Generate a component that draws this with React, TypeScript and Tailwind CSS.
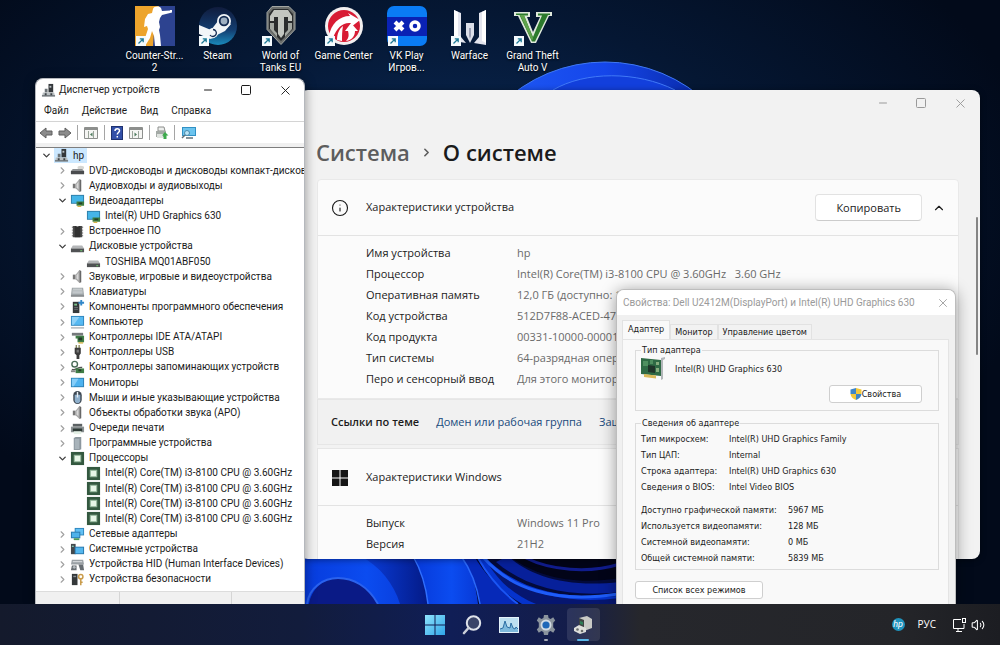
import { useState, ReactNode } from 'react';
import { ChevronDown, ChevronRight, ChevronUp, Info, Minus, Square, Volume2, X } from 'lucide-react';
import clsx from 'clsx';

type IconName =
  | 'root' | 'optical' | 'speaker' | 'display' | 'firmware' | 'disk' | 'keyboard' | 'component'
  | 'computer' | 'ide' | 'usb' | 'storage' | 'monitor' | 'mouse' | 'printer' | 'software' | 'cpu'
  | 'network' | 'system' | 'hid' | 'security';

interface TreeItem {
  label: string;
  icon: IconName;
  level: number;
  open?: boolean;
}

const CPU = 'Intel(R) Core(TM) i3-8100 CPU @ 3.60GHz';

const TREE: TreeItem[] = [
  { label: 'hp', icon: 'root', level: 0, open: true },
  { label: 'DVD-дисководы и дисководы компакт-дисков', icon: 'optical', level: 1, open: false },
  { label: 'Аудиовходы и аудиовыходы', icon: 'speaker', level: 1, open: false },
  { label: 'Видеоадаптеры', icon: 'display', level: 1, open: true },
  { label: 'Intel(R) UHD Graphics 630', icon: 'display', level: 2 },
  { label: 'Встроенное ПО', icon: 'firmware', level: 1, open: false },
  { label: 'Дисковые устройства', icon: 'disk', level: 1, open: true },
  { label: 'TOSHIBA MQ01ABF050', icon: 'disk', level: 2 },
  { label: 'Звуковые, игровые и видеоустройства', icon: 'speaker', level: 1, open: false },
  { label: 'Клавиатуры', icon: 'keyboard', level: 1, open: false },
  { label: 'Компоненты программного обеспечения', icon: 'component', level: 1, open: false },
  { label: 'Компьютер', icon: 'computer', level: 1, open: false },
  { label: 'Контроллеры IDE ATA/ATAPI', icon: 'ide', level: 1, open: false },
  { label: 'Контроллеры USB', icon: 'usb', level: 1, open: false },
  { label: 'Контроллеры запоминающих устройств', icon: 'storage', level: 1, open: false },
  { label: 'Мониторы', icon: 'monitor', level: 1, open: false },
  { label: 'Мыши и иные указывающие устройства', icon: 'mouse', level: 1, open: false },
  { label: 'Объекты обработки звука (APO)', icon: 'speaker', level: 1, open: false },
  { label: 'Очереди печати', icon: 'printer', level: 1, open: false },
  { label: 'Программные устройства', icon: 'software', level: 1, open: false },
  { label: 'Процессоры', icon: 'cpu', level: 1, open: true },
  { label: CPU, icon: 'cpu', level: 2 },
  { label: CPU, icon: 'cpu', level: 2 },
  { label: CPU, icon: 'cpu', level: 2 },
  { label: CPU, icon: 'cpu', level: 2 },
  { label: 'Сетевые адаптеры', icon: 'network', level: 1, open: false },
  { label: 'Системные устройства', icon: 'system', level: 1, open: false },
  { label: 'Устройства HID (Human Interface Devices)', icon: 'hid', level: 1, open: false },
  { label: 'Устройства безопасности', icon: 'security', level: 1, open: false },
];

const INDENT = ['pl-0', 'pl-4', 'pl-8'];

const DEVICE_SPECS = [
  ['Имя устройства', 'hp'],
  ['Процессор', 'Intel(R) Core(TM) i3-8100 CPU @ 3.60GHz \u00a0 3.60 GHz'],
  ['Оперативная память', '12,0 ГБ (доступно: 11,7 ГБ)'],
  ['Код устройства', '512D7F88-ACED-47'],
  ['Код продукта', '00331-10000-00001'],
  ['Тип системы', '64-разрядная операционная система'],
  ['Перо и сенсорный ввод', 'Для этого монитора'],
];

const WINDOWS_SPECS = [
  ['Выпуск', 'Windows 11 Pro'],
  ['Версия', '21H2'],
];

const ADAPTER_INFO = [
  ['Тип микросхем:', 'Intel(R) UHD Graphics Family'],
  ['Тип ЦАП:', 'Internal'],
  ['Строка адаптера:', 'Intel(R) UHD Graphics 630'],
  ['Сведения о BIOS:', 'Intel Video BIOS'],
];

const ADAPTER_MEMORY = [
  ['Доступно графической памяти:', '5967 МБ'],
  ['Используется видеопамяти:', '128 МБ'],
  ['Системной видеопамяти:', '0 МБ'],
  ['Общей системной памяти:', '5839 МБ'],
];

/* Tree icons, 16x16 */
const treeIcons: Record<IconName, ReactNode> = {
  root: (
    <>
      <rect x="8" y="1" width="5" height="9" fill="#34383b" />
      <rect x="9" y="3" width="2" height="2" fill="#b9c0c4" />
      <path d="M4 6h3v4H4z" fill="#6d7478" />
      <path d="M2 10h12l1 4H1z" fill="#b9bfc2" />
      <path d="M1 13h14v1.500H1z" fill="#62686c" />
      <path d="M4 11h2v2H4zM10 11h2v2h-2z" fill="#3f4448" />
    </>
  ),
  optical: (
    <>
      <ellipse cx="11.500" cy="5" rx="3.500" ry="2" fill="#d6d6d2" />
      <path d="M3 6.500h10l2 2v3H1v-3z" fill="#8d9092" />
      <path d="M1 8.500h14V12H1z" fill="#4a4c4e" />
    </>
  ),
  speaker: (
    <>
      <path d="M3 6h3v5H3z" fill="#777" />
      <path d="M6 6l4-5v14l-4-4z" fill="#a9a9a9" />
      <path d="M10 1l2 1v12l-2 1z" fill="#686868" />
      <path d="M7 7l2-3v8L7 10z" fill="#d8d8d8" />
    </>
  ),
  display: (
    <>
      <rect x="1" y="2" width="14" height="9.500" fill="#2f7ea8" />
      <rect x="2" y="3" width="12" height="7.500" fill="#45b5e8" />
      <path d="M7 9h8v4.500H7z" fill="#3d7d3f" />
      <path d="M9 10h4v2H9z" fill="#22402a" />
      <path d="M8 13.500h4V15H8z" fill="#d5b44a" />
    </>
  ),
  firmware: (
    <>
      <path d="M3 2h10v12H3z" fill="#4b4b4b" />
      <path d="M5 2h6v12H5z" fill="#303030" />
      <path d="M2 3h1v1H2zM2 6h1v1H2zM2 9h1v1H2zM2 12h1v1H2zM13 3h1v1h-1zM13 6h1v1h-1zM13 9h1v1h-1zM13 12h1v1h-1z" fill="#555" />
      <path d="M7 2h2v1H7z" fill="#aaa" />
    </>
  ),
  disk: (
    <>
      <path d="M3 7h10l2 3H1z" fill="#b4b6b8" />
      <path d="M1 10h14v4H1z" fill="#505254" />
      <path d="M11 12h2v1h-2z" fill="#6fd06f" />
    </>
  ),
  keyboard: (
    <>
      <path d="M2 4h12l1 8H1z" fill="#9ea4a7" />
      <path d="M3 5.500h10M2.500 7.500h11M2.500 9.500h11" stroke="#dfe3e5" />
      <path d="M1 12h14v1.500H1z" fill="#6b7073" />
    </>
  ),
  component: (
    <>
      <path d="M3 3h7v12H3z" fill="#34383a" />
      <path d="M4.500 5h3v2h-3z" fill="#7ec28a" />
      <path d="M4.500 9h4M4.500 11h4" stroke="#6b7073" />
      <path d="M12 1v6M9 4h6" stroke="#3187c9" strokeWidth="2" />
    </>
  ),
  computer: (
    <>
      <rect x="1" y="1" width="14" height="10.500" fill="#2f86bd" />
      <rect x="2" y="2" width="12" height="8.500" fill="#56b9f2" />
      <path d="M2 2h8l-6 8.500H2z" fill="#8ed1f8" />
      <path d="M1 13h14v1.500H1z" fill="#aeb4b8" />
    </>
  ),
  ide: (
    <>
      <path d="M2 3h12v3H2z" fill="#767a7c" />
      <path d="M6 6h9v7H8V9H6z" fill="#3f7d46" />
      <path d="M9 8h4v3H9z" fill="#24392a" />
      <path d="M9 13h5v1.500H9z" fill="#d5b44a" />
    </>
  ),
  usb: (
    <>
      <path d="M6 0h1.500v4H6zM9 0h1.500v4H9z" fill="#8a8a60" />
      <path d="M5 3h6.500v6l-1.500 2v4H7v-4L5 9z" fill="#3b3b3b" />
      <path d="M7 5h2.500v3H7z" fill="#777" />
    </>
  ),
  storage: (
    <>
      <circle cx="5" cy="4.500" r="3" fill="none" stroke="#4a6b58" strokeWidth="1.500" />
      <path d="M2 10c4 2 6-3 11-2" stroke="#555" strokeWidth="1.500" fill="none" />
      <path d="M6 9h9v5H6z" fill="#3f7d46" />
      <path d="M9 10h3v2H9z" fill="#24392a" />
      <path d="M1 11h5v2H1z" fill="#888" />
    </>
  ),
  monitor: (
    <>
      <rect x="1" y="3" width="14" height="10" fill="#2d7fb5" />
      <rect x="2" y="4" width="12" height="8" fill="#4db2ef" />
      <path d="M2 4h7l-5 8H2z" fill="#85cdf8" />
    </>
  ),
  mouse: (
    <>
      <rect x="3.500" y="1" width="9" height="14" rx="4.500" fill="#3c4650" />
      <path d="M5 5h6v6a3 3 0 0 1-6 0z" fill="#8fb0cc" />
      <path d="M8 2v6" stroke="#e7eef4" strokeWidth="1.500" />
    </>
  ),
  printer: (
    <>
      <path d="M3 3h10v3H3z" fill="#5c6163" />
      <path d="M1 6h14v6H1z" fill="#8a9092" />
      <path d="M3 8h10v3H3z" fill="#2e3a36" />
      <path d="M4 11h8v3H4z" fill="#e4f0e6" />
    </>
  ),
  software: (
    <>
      <path d="M4 2l2-1h6v13l-2 1H4z" fill="#8c979e" />
      <path d="M5 3h5v11H5z" fill="#a8b3ba" />
    </>
  ),
  cpu: (
    <>
      <rect x="1" y="1" width="14" height="14" fill="#33583f" />
      <rect x="4.500" y="4.500" width="7" height="7" fill="#e6f5e6" stroke="#8fb497" />
    </>
  ),
  network: (
    <>
      <rect x="5" y="1" width="10" height="8" fill="#2f86bd" />
      <rect x="6" y="2" width="8" height="6" fill="#62c0f4" />
      <rect x="1" y="5" width="10" height="7" fill="#2a78ac" />
      <rect x="2" y="6" width="8" height="5" fill="#4fb2ea" />
      <path d="M4 12h6v2H4z" fill="#4f9a5a" />
    </>
  ),
  system: (
    <>
      <path d="M1 2h5v11H1z" fill="#43494d" />
      <path d="M2 4h2v1H2z" fill="#9fd" />
      <rect x="5" y="5" width="10" height="8" fill="#2a78ac" />
      <rect x="6" y="6" width="8" height="6" fill="#55b7ee" />
    </>
  ),
  hid: (
    <>
      <path d="M2 3h12l1 5H1z" fill="#9aa0a4" />
      <path d="M3 5h10" stroke="#e2e5e7" />
      <path d="M2 9h5v5H1zM9 8h5l1 6h-4z" fill="#676d72" />
      <circle cx="4.500" cy="11" r="1.500" fill="#b7bdc1" />
    </>
  ),
  security: (
    <>
      <path d="M2 2h6v12H2z" fill="#34383a" />
      <path d="M3.500 4h3v1.500h-3z" fill="#8a8f92" />
      <circle cx="11.500" cy="5" r="2.300" fill="none" stroke="#c99b4a" strokeWidth="1.600" />
      <path d="M11.500 7v7M11.500 11h2" stroke="#c99b4a" strokeWidth="1.600" />
    </>
  ),
};

function TreeIcon({ name }: { name: IconName }) {
  return (
    <svg viewBox="0 0 16 16" className="size-[15px] shrink-0" aria-hidden="true">
      {treeIcons[name]}
    </svg>
  );
}

function Wallpaper() {
  return (
    <svg
      viewBox="0 0 1000 604"
      preserveAspectRatio="xMidYMid slice"
      className="absolute inset-0 size-full"
      aria-hidden="true"
    >
      <defs>
        <radialGradient id="bg" cx="0.45" cy="0.35" r="0.6">
          <stop offset="0" stopColor="#0a2c5c" />
          <stop offset="0.55" stopColor="#051733" />
          <stop offset="1" stopColor="#020a1a" />
        </radialGradient>
        <linearGradient id="petal" x1="0.2" x2="0.8">
          <stop offset="0" stopColor="#1c55f2" />
          <stop offset="0.5" stopColor="#1546ea" />
          <stop offset="1" stopColor="#0a2cae" />
        </linearGradient>
        <linearGradient id="band" x1="0" x2="1">
          <stop offset="0" stopColor="#0638d8" />
          <stop offset="0.6" stopColor="#0b4cf0" />
          <stop offset="1" stopColor="#0839d6" />
        </linearGradient>
        <linearGradient id="shade" x1="0" x2="1">
          <stop offset="0" stopColor="#0a3fe0" />
          <stop offset="1" stopColor="#041a86" />
        </linearGradient>
      </defs>
      <rect width="1000" height="604" fill="url(#bg)" />
      <circle cx="605" cy="211" r="149" fill="url(#petal)" stroke="#3f78f5" />
      <path d="M553 90c32-19 84-19 122 0" fill="#123fdc" stroke="#4079f7" />
      <path d="M290 540h330v64H290z" fill="#030a3a" />
      <path d="M290 540h90c16 16 30 36 38 64H290z" fill="url(#band)" />
      <path d="M309 604c2-14 14-26 29-26s32 10 40 26z" fill="#0a1a86" />
      <path d="M307 604c2-16 16-26 31-26s30 8 40 26" fill="none" stroke="#2a62ee" strokeWidth="2" />
      <path d="M360 556c20 10 34 28 40 48h28c-2-20-6-34-14-48z" fill="url(#shade)" />
      <path d="M412 552h50c8 16 14 32 16 52h-50c-2-20-8-36-16-52z" fill="url(#band)" />
      <path d="M413 556c8 14 13 30 15 48" fill="none" stroke="#2f6fff" strokeWidth="1.500" />
      <path d="M461 556c10 14 16 30 19 48h38c-14-10-32-28-44-48z" fill="#0629b8" />
      <path d="M461 556c10 14 16 30 19 48" fill="none" stroke="#2a68fa" strokeWidth="1.500" />
      <path d="M476 556c12 20 28 38 46 48h96v-8c-60 4-104-8-134-40z" fill="#0533cc" />
      <path d="M518 604c-16-12-30-28-40-46" fill="none" stroke="#1a55f5" strokeWidth="2" />
      <path d="M536 604c-20-8-38-22-50-44 26 28 70 46 134 38v6z" fill="#061670" />
      <path d="M484 558c26 30 70 46 134 36" fill="none" stroke="#1e5cf8" strokeWidth="3" />
      <path d="M508 556c22 20 58 32 112 26v10c-50 6-94-4-124-30z" fill="#07209a" />
      <path d="M512 558c24 18 62 28 108 20v-22z" fill="#020418" />
      <path d="M526 558c24 12 62 16 94 6" fill="none" stroke="#101c8c" strokeWidth="3" />
    </svg>
  );
}

function ShortcutArrow() {
  return (
    <g>
      <rect x="1" y="30" width="10" height="10" fill="#f4fafd" />
      <path d="M3.500 37.500l4.500-4.500M4.800 32.800H8.200V36.200" fill="none" stroke="#1f7a96" strokeWidth="1.300" />
    </g>
  );
}

const shortcuts: { lines: string[]; art: ReactNode }[] = [
  {
    lines: ['Counter-Str...', '2'],
    art: (
      <>
        <path d="M0 0h40v40H0z" fill="#2d4390" />
        <path d="M0 0h24l-4 12-2 28H0z" fill="#eda42c" />
        <path
          d="M18 3c1-3 6-3 8-1l1 3 8-.5V4h2v2.500l-10 2.500-2 3-1 4 1 5-1 3 1 5 1 11h-6l-1-10-2-5-2 7-5 8H7l3-8 3-9-1-3-3 1 1-8 3-5 4-1z"
          fill="#fff"
        />
      </>
    ),
  },
  {
    lines: ['Steam'],
    art: (
      <>
        <defs>
          <linearGradient id="steam" x1="0" y1="0" x2="0" y2="1">
            <stop offset="0" stopColor="#101c3d" />
            <stop offset="0.6" stopColor="#133d70" />
            <stop offset="1" stopColor="#1a8abb" />
          </linearGradient>
        </defs>
        <circle cx="20" cy="20" r="19" fill="url(#steam)" />
        <path d="M1 19l12 5 7-9 13 3-6 7-8 4-3 3-4 1-11-5z" fill="#f2f5f8" />
        <circle cx="26" cy="15" r="7" fill="#f2f5f8" />
        <circle cx="26" cy="15" r="4.300" fill="#9fb0c2" stroke="#142b52" strokeWidth="1.800" />
        <circle cx="15" cy="27" r="5" fill="#f2f5f8" />
        <path d="M12 29a3.500 3.500 0 1 0 3-5.500" fill="none" stroke="#142b52" strokeWidth="1.300" />
      </>
    ),
  },
  {
    lines: ['World of', 'Tanks EU'],
    art: (
      <>
        <path d="M11 .5h17l6 6v17L20 38.500 6 23.500v-17z" fill="#6b6e6c" stroke="#a3a6a2" />
        <path d="M12 3h15l5 5v15L20 35 8 22.500V8z" fill="#2b2d2e" />
        <path d="M9 10l4-6h14l4 6v5h-4v-4h-4v17l-3 4-3-4V11h-4v4H9z" fill="#c3c6c0" />
        <path d="M9 17h4v7l3 3v4l-7-8zM31 17h-4v7l-3 3v4l7-8z" fill="#a4a8a2" />
      </>
    ),
  },
  {
    lines: ['Game Center'],
    art: (
      <>
        <circle cx="20" cy="20" r="19" fill="#f3f0f0" />
        <circle cx="20" cy="20" r="16" fill="#d81c34" />
        <path d="M5 30C7 18 15 10 26 10l-2-3 12 7-9 7v-4c-8-1-14 4-18 15z" fill="#fff" />
        <path d="M27 17l7 8h-3c0 5-3 9-9 10 3-3 3-6 2-10h-3z" fill="#fff" />
        <path d="M13 34c0-6 2-11 6-14-1 5-1 10-1 15z" fill="#fff" />
      </>
    ),
  },
  {
    lines: ['VK Play', 'Игров...'],
    art: (
      <>
        <rect width="40" height="40" rx="7" fill="#0a7cf5" />
        <path d="M0 11h40v19H0z" fill="#0a22b4" />
        <path d="M8 16l8 8M16 16l-8 8" stroke="#fff" strokeWidth="4" />
        <circle cx="28" cy="20" r="4" fill="none" stroke="#fff" strokeWidth="3.500" />
      </>
    ),
  },
  {
    lines: ['Warface'],
    art: (
      <>
        <path d="M4 4l7 3v24l5 6-12-2zM36 4l-7 3v24l-5 6 12 2z" fill="#e3e5ee" />
        <path d="M4 4l4 2v28H4zM36 4l-4 2v29l4 2z" fill="#fff" />
        <path d="M16 17h8v12l-4 8-4-8z" fill="#dcdfe9" />
        <path d="M19 22h2v8l-1 3-1-3z" fill="#9ba0b4" />
      </>
    ),
  },
  {
    lines: ['Grand Theft', 'Auto V'],
    art: (
      <>
        <path d="M1 6h16v5h-3l6 15 7-15h-4V6h16v4h-3L23 37h-5L5 10H1z" fill="#dfe8dc" />
        <path d="M3 7.500h12v2h-4L20 31l9-21.500h-4v-2h12V9h-2L22 35.500h-3L6.500 9H3z" fill="#2c7a2c" />
        <path d="M7 9h4l9 23-1 3z" fill="#5ea24a" />
      </>
    ),
  },
];

function DesktopShortcuts() {
  return (
    <div className="absolute left-[123px] top-[6px] flex">
      {shortcuts.map(({ lines, art }) => (
        <button key={lines[0]} type="button" className="flex w-[63px] flex-col items-center">
          <svg viewBox="0 0 40 40" className="size-10" aria-hidden="true">
            {art}
            <ShortcutArrow />
          </svg>
          <span className="mt-1 text-center text-[10px] leading-3 text-white [text-shadow:0_1px_2px_#000]">
            {lines.map((line) => (
              <span key={line} className="block whitespace-nowrap">
                {line}
              </span>
            ))}
          </span>
        </button>
      ))}
    </div>
  );
}

function WindowButtons({ className, size }: { className: string; size: number }) {
  return (
    <div className={clsx('flex items-center', className)}>
      <button type="button" aria-label="Свернуть">
        <Minus size={size} strokeWidth={2} />
      </button>
      <button type="button" aria-label="Развернуть">
        <Square size={size} strokeWidth={2} />
      </button>
      <button type="button" aria-label="Закрыть">
        <X size={size + 3} strokeWidth={1.5} />
      </button>
    </div>
  );
}

function Toolbar() {
  const separator = <span className="h-[15px] w-px bg-[#a5a5a5]" />;
  return (
    <div className="flex h-[22px] items-center gap-[5px] border-t border-[#d4d4d4] px-[3px]">
      <button type="button" aria-label="Назад">
        <svg viewBox="0 0 14 14" className="size-[14px]">
          <path d="M1 7l6-5v3h6v4H7v3z" fill="#8b8b8b" stroke="#5f5f5f" />
        </svg>
      </button>
      <button type="button" aria-label="Вперёд">
        <svg viewBox="0 0 14 14" className="size-[14px]">
          <path d="M13 7L7 2v3H1v4h6v3z" fill="#8b8b8b" stroke="#5f5f5f" />
        </svg>
      </button>
      {separator}
      <button type="button" aria-label="Дерево консоли" className="mx-px">
        <svg viewBox="0 0 14 14" className="size-[14px]">
          <path d="M.5 1.500h13v11H.5z" fill="#f5f5f3" stroke="#8d8f8d" />
          <path d="M1 3h12" stroke="#8d8f8d" strokeWidth="2" />
          <path d="M4.500 5v7M9.500 5v7" stroke="#9aa59a" />
          <path d="M8.500 6.500v4L6 8.500z" fill="#4c7a5c" />
        </svg>
      </button>
      {separator}
      <button type="button" aria-label="Справка" className="mx-px">
        <svg viewBox="0 0 12 14" className="h-[14px] w-3">
          <rect x="0.500" y="0.500" width="11" height="13" fill="#3350a8" stroke="#1f3270" />
          <path d="M4 5c0-3 4.500-3 4.500-.3C8.500 6.500 6.300 6.500 6.300 8.500M6.300 10v1.500" fill="none" stroke="#fff" strokeWidth="1.500" />
        </svg>
      </button>
      <button type="button" aria-label="Область действий" className="mr-px">
        <svg viewBox="0 0 14 14" className="size-[14px]">
          <path d="M.5 1.500h13v11H.5z" fill="#f5f5f3" stroke="#8d8f8d" />
          <path d="M1 3h12" stroke="#8d8f8d" strokeWidth="2" />
          <path d="M3.500 5v7M9.500 5v7" stroke="#9aa59a" />
          <path d="M5.500 6.500v4L8 8.500z" fill="#4c7a5c" />
        </svg>
      </button>
      {separator}
      <button type="button" aria-label="Обновить конфигурацию">
        <svg viewBox="0 0 14 14" className="size-[14px]">
          <path d="M3 1h6l1 4H3z" fill="#eceeec" stroke="#8d8f8d" />
          <path d="M1 5h10v6H1z" fill="#a4aaa6" />
          <path d="M2 8h6v4H2z" fill="#dfe3df" />
          <path d="M10 6l3.500 3.500H11.500V13h-3V9.500H7z" fill="#3caa4c" />
        </svg>
      </button>
      {separator}
      <button type="button" aria-label="Сканировать" className="ml-px">
        <svg viewBox="0 0 16 14" className="h-[14px] w-4">
          <path d="M1 1h14v9H1z" fill="#3191c5" />
          <path d="M2 2h12v7H2z" fill="#6cc4ee" />
          <circle cx="6" cy="7" r="2.500" fill="#b9e4f8" stroke="#4d8aa8" />
          <path d="M4 9l-3 3M5 12h7" stroke="#60717a" strokeWidth="1.500" />
        </svg>
      </button>
    </div>
  );
}

function DeviceManager() {
  const [selected, setSelected] = useState(0);
  return (
    <section className="absolute bottom-0 left-[35px] top-[78px] flex w-[270px] flex-col overflow-hidden rounded-t-lg border border-b-0 border-[#b5b8bd] bg-white text-[10px] leading-3 text-[#1b1b1b] shadow-[0_2px_12px_rgba(0,0,0,0.4)]">
      <header className="flex h-[22px] shrink-0 items-center gap-[3px] pl-[5px] pr-[11px]">
        <TreeIcon name="root" />
        <h1 className="flex-1 whitespace-nowrap">Диспетчер устройств</h1>
        <WindowButtons size={12} className="gap-[26px]" />
      </header>
      <nav className="flex h-5 shrink-0 items-center gap-[13px] pl-2">
        {['Файл', 'Действие', 'Вид', 'Справка'].map((item) => (
          <button key={item} type="button">
            {item}
          </button>
        ))}
      </nav>
      <Toolbar />
      <div className="h-1 shrink-0 bg-[#f0f0f0]" />
      <ul className="grid flex-1 auto-rows-fr overflow-hidden border-t border-[#7d7d7d] pb-1 pl-[2px]">
        {TREE.map((item, index) => (
          <li key={index} className={clsx('flex min-h-0 items-center', INDENT[item.level])}>
            <button
              type="button"
              aria-label={item.label}
              className="flex w-4 shrink-0 justify-center"
              onClick={() => setSelected(index)}
            >
              {item.open === true && <ChevronDown size={11} strokeWidth={3} className="text-[#404040]" />}
              {item.open === false && <ChevronRight size={11} strokeWidth={2.5} className="text-[#a0a0a0]" />}
            </button>
            <span
              className={clsx(
                'flex items-center gap-1 whitespace-nowrap pr-[3px]',
                selected === index && 'bg-[#cce8ff]',
              )}
            >
              <TreeIcon name={item.icon} />
              {item.label}
            </span>
          </li>
        ))}
      </ul>
      <footer className="flex h-[13px] shrink-0 border-t border-[#dcdcdc] bg-[#f0f0f0]">
        <span className="w-[84px] border-r border-[#d5d5d5]" />
        <span className="w-28 border-r border-[#d5d5d5]" />
      </footer>
    </section>
  );
}

function SpecList({ rows }: { rows: string[][] }) {
  return (
    <dl className="grid grid-cols-[151px_1fr] whitespace-nowrap pl-12 leading-[21px]">
      {rows.map(([label, value]) => (
        <div key={label} className="contents">
          <dt>{label}</dt>
          <dd className="overflow-hidden text-[#6a6a6a]">{value}</dd>
        </div>
      ))}
    </dl>
  );
}

function SettingsWindow() {
  const [expanded, setExpanded] = useState(true);
  return (
    <section className="absolute bottom-[45px] left-[300px] right-5 top-[90px] overflow-hidden rounded-lg bg-[#f2f2f2] font-['Open_Sans','Noto_Sans',sans-serif] text-[11px] text-[#1b1b1b] shadow-[0_1px_6px_rgba(0,0,0,0.4)]">
      <header className="flex h-[26px] items-center justify-end pr-3">
        <WindowButtons size={12} className="gap-[26px] text-[#9a9a9a]" />
      </header>
      <h2 className="flex h-[63px] items-center gap-[10px] pl-4 pt-[10px] text-[22px] font-semibold">
        <a href="#system" className="text-[#5d5d5d]">
          Система
        </a>
        <ChevronRight size={13} strokeWidth={3} className="text-[#5d5d5d]" />
        <span>О системе</span>
      </h2>

      <div className="ml-[17px] mr-[21px]">
        <div className="rounded-t border border-[#e9e9e9] bg-[#fbfbfb]">
          <div className="flex h-14 items-center border-b border-[#e3e3e3] pl-[13px] pr-3">
            <Info size={18} strokeWidth={1.5} />
            <h3 className="flex-1 pl-[17px]">Характеристики устройства</h3>
            <button
              type="button"
              className="rounded border border-[#e2e2e2] border-b-[#cccccc] bg-white px-5 py-1 leading-[17px]"
            >
              Копировать
            </button>
            <button
              type="button"
              aria-label="Свернуть раздел"
              className="ml-[10px]"
              onClick={() => setExpanded(!expanded)}
            >
              <ChevronUp size={14} strokeWidth={2} />
            </button>
          </div>
          {expanded && (
            <div className="pb-[9px] pt-[6px]">
              <SpecList rows={DEVICE_SPECS} />
            </div>
          )}
        </div>
        <div className="flex h-[46px] items-center gap-[17px] overflow-hidden whitespace-nowrap border border-[#e6e6e6] bg-[#f1f1f1] pl-[13px]">
          <span className="font-semibold">Ссылки по теме</span>
          <a href="#domain" className="text-[#184a7c]">
            Домен или рабочая группа
          </a>
          <a href="#protection" className="text-[#184a7c]">
            Защита системы
          </a>
        </div>

        <div className="mt-[3px] border border-[#e6e6e6] bg-[#fbfbfb]">
          <div className="flex h-[57px] items-center border-b border-[#e3e3e3] pl-[13px] pt-px">
            <svg viewBox="0 0 18 18" className="size-[18px]" aria-hidden="true">
              <path d="M1 1h7.500v7.500H1zM9.500 1H17v7.500H9.500zM1 9.500h7.500V17H1zM9.500 9.500H17V17H9.500z" fill="#151515" />
            </svg>
            <h3 className="pl-[17px]">Характеристики Windows</h3>
          </div>
          <div className="pb-5 pt-[6px]">
            <SpecList rows={WINDOWS_SPECS} />
          </div>
        </div>
      </div>
      {/* scroll thumb */}
      <div className="absolute right-[2px] top-[127px] h-[138px] w-[2px] rounded-full bg-[#858585]" />
    </section>
  );
}

function InfoRows({ rows, columns }: { rows: string[][]; columns: string }) {
  return (
    <dl className={clsx('grid gap-y-1 whitespace-nowrap', columns)}>
      {rows.map(([label, value]) => (
        <div key={label} className="contents">
          <dt>{label}</dt>
          <dd>{value}</dd>
        </div>
      ))}
    </dl>
  );
}

function AdapterDialog() {
  const [tab, setTab] = useState('Адаптер');
  return (
    <section className="absolute bottom-0 left-[616px] top-[289px] flex w-[340px] flex-col overflow-hidden rounded-t-lg border border-b-0 border-[#bdbdbd] bg-[#f0f0f0] font-['DejaVu_Sans_Condensed','DejaVu_Sans',sans-serif] text-[9px] leading-3 text-[#1b1b1b] shadow-[0_2px_16px_rgba(0,0,0,0.4)]">
      <header className="flex h-[25px] shrink-0 items-center justify-between bg-white pl-[6px] pr-[5px] font-['Roboto',sans-serif] text-[10px] text-[#9a9a9a]">
        <h2 className="whitespace-nowrap">Свойства: Dell U2412M(DisplayPort) и Intel(R) UHD Graphics 630</h2>
        <button type="button" aria-label="Закрыть">
          <X size={14} strokeWidth={1.5} />
        </button>
      </header>
      <div role="tablist" className="flex shrink-0 items-end pl-[5px] pt-[5px]">
        {['Адаптер', 'Монитор', 'Управление цветом'].map((name) => (
          <button
            key={name}
            type="button"
            role="tab"
            aria-selected={tab === name}
            onClick={() => setTab(name)}
            className={clsx(
              'whitespace-nowrap border border-b-0 border-[#e2e2e2]',
              tab === name ? 'bg-[#f9f9f9] px-[5px] pb-1 pt-[2px]' : 'bg-[#f2f2f2] px-1 py-px',
            )}
          >
            {name}
          </button>
        ))}
      </div>
      <div className="ml-[5px] mr-[6px] flex-1 border-x border-t border-[#e4e4e4] bg-[#f9f9f9] pl-3 pr-[9px] pt-1">
        <fieldset className="border border-[#dcdcdc] px-[5px] pb-[7px]">
          <legend className="px-px">Тип адаптера</legend>
          <div className="flex items-center gap-[9px]">
            <svg viewBox="0 0 25 25" className="size-[25px]" aria-hidden="true">
              <path d="M0 2l20 2v16L0 18z" fill="#2f6a45" />
              <path d="M2 5h5v5H2zM9 4h3v4H9z" fill="#4f8f60" />
              <path d="M7 9l7 1v7l-7-1z" fill="#20352a" />
              <path d="M3 18l12 1.500v3L3 21z" fill="#d9b959" />
              <path d="M15 6h3v3h-3zM15 12h3v4h-3z" fill="#86ad7e" />
              <path d="M20 2l4-1v2l-2 1v19l-2 1z" fill="#b3b7ba" />
            </svg>
            <span>Intel(R) UHD Graphics 630</span>
          </div>
          <div className="flex justify-end pr-[11px] pt-1">
            <button
              type="button"
              className="flex w-[93px] items-center justify-center rounded-[3px] border border-[#cfcfcf] bg-white py-[2px]"
            >
              <svg viewBox="0 0 12 12" className="size-3" aria-hidden="true">
                <path d="M6 0L.5 1.500V6H6z" fill="#3f86c8" />
                <path d="M6 0l5.500 1.500V6H6z" fill="#f2c83b" />
                <path d="M.5 6c.3 3 2.500 5 5.500 6V6z" fill="#f2c83b" />
                <path d="M11.500 6c-.3 3-2.500 5-5.500 6V6z" fill="#3f86c8" />
              </svg>
              Свойства
            </button>
          </div>
        </fieldset>

        <fieldset className="mt-[6px] border border-[#dcdcdc] px-[5px] pb-[5px]">
          <legend className="px-px">Сведения об адаптере</legend>
          <div className="flex flex-col gap-[11px] pt-1">
            <InfoRows rows={ADAPTER_INFO} columns="grid-cols-[88px_1fr]" />
            <InfoRows rows={ADAPTER_MEMORY} columns="grid-cols-[147px_1fr]" />
          </div>
        </fieldset>

        <button
          type="button"
          className="mt-[11px] w-32 rounded-[3px] border border-[#cfcfcf] bg-white py-[2px]"
        >
          Список всех режимов
        </button>
      </div>
    </section>
  );
}

function Taskbar() {
  return (
    <footer className="relative grid h-[41px] shrink-0 grid-cols-[1fr_auto_1fr] items-center bg-[linear-gradient(90deg,#141a2c_0%,#121c3c_30%,#101e56_45%,#141d4a_57%,#26272c_64%,#242529_90%,#1c1d22_100%)] pl-[18px] text-white">
      <div />
      <div className="flex items-center gap-1">
        <button type="button" aria-label="Пуск" className="flex size-[33px] items-center justify-center">
          <svg viewBox="0 0 20 20" className="size-5">
            <defs>
              <linearGradient id="start" x1="0" y1="0" x2="1" y2="1">
                <stop offset="0" stopColor="#8fe3fb" />
                <stop offset="1" stopColor="#2fa6ea" />
              </linearGradient>
            </defs>
            <path d="M0 0h9.500v9.500H0zM10.500 0H20v9.500h-9.500zM0 10.500h9.500V20H0zM10.500 10.500H20V20h-9.500z" fill="url(#start)" />
          </svg>
        </button>
        <button type="button" aria-label="Поиск" className="flex size-[33px] items-center justify-center">
          <svg viewBox="0 0 20 20" className="size-5">
            <circle cx="11.500" cy="8" r="6.700" fill="#3a4468" stroke="#dfe3ea" strokeWidth="2" />
            <path d="M6.500 13L2 18" stroke="#c9ced8" strokeWidth="2.600" strokeLinecap="round" />
          </svg>
        </button>
        <button type="button" aria-label="Диспетчер задач" className="flex size-[33px] items-center justify-center">
          <svg viewBox="0 0 20 16" className="h-4 w-5">
            <rect width="20" height="16" fill="#e4f2fa" />
            <rect x="1" y="1" width="18" height="14" fill="#bcdff0" />
            <path d="M1 15v-3l3-1 2-7 2 6 3 1 1-5 2 5 2 1 1-2 2 3v2z" fill="#7db9dc" />
            <path d="M1 12l3-1 2-7 2 6 3 1 1-5 2 5 2 1 1-2 2 2" fill="none" stroke="#2d6fa4" />
          </svg>
        </button>
        <button type="button" aria-label="Параметры" className="relative flex size-[33px] items-center justify-center">
          <svg viewBox="0 0 20 20" className="size-5">
            <path
              d="M8 0h4l.6 3 2 .9L17.200 2.200l2 3.300-2 2.300v4.400l2 2.300-2 3.300-2.600-1.700-2 .9L12 20H8l-.6-3-2-.9-2.600 1.700-2-3.300 2-2.300V7.800l-2-2.300 2-3.300L5.400 3.900l2-.9z"
              fill="#8a939d"
            />
            <circle cx="10" cy="10" r="5.500" fill="#d3dbe3" />
            <circle cx="10" cy="10" r="3.600" fill="#2068b8" />
          </svg>
          <span className="absolute bottom-0 h-[2px] w-1 rounded bg-[#a8adb8]" />
        </button>
        <button
          type="button"
          aria-label="Диспетчер устройств"
          className="relative flex size-[33px] items-center justify-center rounded bg-white/10"
        >
          <svg viewBox="0 0 20 20" className="size-5">
            <path d="M6 3l8-2 5 3v9l-8 3-5-3z" fill="#c9cac6" />
            <path d="M6 3l5 2v9l-5-3z" fill="#3f4343" />
            <path d="M7 6l3 1v3L7 9z" fill="#2f7e57" />
            <path d="M1 13l5-3 7 3v4l-6 2-6-3z" fill="#dedfdb" />
            <circle cx="4.500" cy="14.500" r="1.300" fill="#6a6d6c" />
            <circle cx="9" cy="16" r="1.300" fill="#6a6d6c" />
          </svg>
          <span className="absolute bottom-0 h-[2px] w-3 rounded bg-[#5ab8ea]" />
        </button>
      </div>
      <div className="flex items-center justify-end pr-[15px] text-[11px]">
        <button
          type="button"
          className="flex size-[13px] items-center justify-center rounded-full bg-[#1f93bd] pb-px text-[9px] italic leading-none"
        >
          hp
        </button>
        <button type="button" className="ml-[13px] font-['Open_Sans','Noto_Sans',sans-serif] text-[10px]">
          РУС
        </button>
        <button type="button" aria-label="Сеть" className="ml-[15px]">
          <svg viewBox="0 0 16 16" className="size-4" fill="none" stroke="#fff">
            <path d="M10 2.500H2.500v9H13V7M5 14.500h6M7 12v2" />
            <rect x="11.500" y="1.500" width="3" height="4" />
          </svg>
        </button>
        <button type="button" aria-label="Громкость" className="ml-1">
          <Volume2 size={14} strokeWidth={1.8} />
        </button>
      </div>
    </footer>
  );
}

export default function App() {
  return (
    <div className="flex h-screen flex-col overflow-hidden bg-[#020a1a] font-['Roboto','Noto_Sans',sans-serif]">
      <main className="relative flex-1 overflow-hidden">
        <Wallpaper />
        <DesktopShortcuts />
        <SettingsWindow />
        <DeviceManager />
        <AdapterDialog />
      </main>
      <Taskbar />
    </div>
  );
}
